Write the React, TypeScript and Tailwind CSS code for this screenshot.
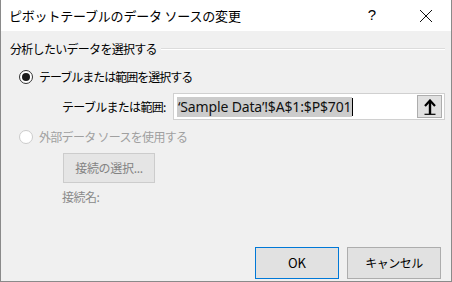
export default function App() {
  const jp = "font-['Noto_Sans_CJK_JP',sans-serif]";
  return (
    <div className={`w-[452px] h-[282px] flex flex-col bg-[#f0f0f0] border-l border-r border-b border-[#8a8a8a] text-[12px] text-black ${jp}`}>
      {/* title bar */}
      <div className="h-[31px] bg-white flex items-center shrink-0">
        <span className="pl-[8px] text-[13px] tracking-[-0.2px]">ピボットテーブルのデータ ソースの変更</span>
        <span className="ml-auto mr-[43px] text-[15px] font-['Liberation_Sans',sans-serif] font-light">?</span>
        <svg width="14" height="14" viewBox="0 0 14 14" className="mr-[18px]">
          <path d="M1 1 L13 13 M13 1 L1 13" stroke="#111" strokeWidth="1" />
        </svg>
      </div>

      <div className="flex flex-col px-[8px]">
        {/* group header */}
        <div className="mt-[9px] h-[18px] flex items-center">
          <span className="tracking-[-0.7px] pl-[1px]">分析したいデータを選択する</span>
          <div className="flex-1 ml-[4px] mr-[-2px] flex flex-col">
            <div className="h-px bg-[#dcdcdc]" />
            <div className="h-px bg-white" />
          </div>
        </div>

        {/* radio 1 */}
        <div className="mt-[9px] h-[20px] flex items-center pl-[10px]">
          <span className="w-[14px] h-[14px] rounded-full border border-[#333] bg-white flex items-center justify-center">
            <span className="w-[8px] h-[8px] rounded-full bg-[#1a1a1a]" />
          </span>
          <span className="ml-[6px] tracking-[-1px]">テーブルまたは範囲を選択する</span>
        </div>

        {/* range input row */}
        <div className="mt-[6px] h-[27px] flex items-center">
          <span className="ml-[53px] w-[111px] tracking-[-0.7px]">テーブルまたは範囲:</span>
          <div className="flex-1 h-[27px] mr-[-2px] bg-white border border-[#d0d0d0] flex items-center pl-[3px] pr-[2px]">
            <span className="h-[20px] flex items-center bg-[#cccccc] pl-[1px] pr-px text-[14px] tracking-[-0.15px] font-['Noto_Sans',sans-serif] text-[#111]">
              ‘Sample Data’!$A$1:$P$701
            </span>
            <span className="w-px h-[18px] bg-black" />
            <button className="ml-auto w-[25px] h-[23px] bg-[#e1e1e1] border border-[#adadad] flex items-center justify-center">
              <svg width="12" height="16" viewBox="0 0 12 16">
                <path d="M6 15 V3" stroke="#000" strokeWidth="2.4" />
                <path d="M1 7 L6 1.5 L11 7" stroke="#000" strokeWidth="2.2" fill="none" />
                <path d="M0.5 15.3 H11.5" stroke="#000" strokeWidth="1.2" />
              </svg>
            </button>
          </div>
        </div>

        {/* radio 2 */}
        <div className="mt-[7px] h-[20px] flex items-center pl-[10px] text-[#a0a0a0]">
          <span className="w-[14px] h-[14px] rounded-full border border-[#cccccc] bg-white" />
          <span className="ml-[6px] tracking-[-0.7px]">外部データ ソースを使用する</span>
        </div>

        {/* connection button */}
        <button className="mt-[6px] ml-[54px] w-[92px] h-[30px] bg-[#e5e5e5] border border-[#cccccc] text-[#838383] tracking-[-0.3px] flex items-center justify-center">
          接続の選択...
        </button>

        <div className="mt-[5px] h-[18px] flex items-center pl-[53px] text-[#8a8a8a] tracking-[-0.5px]">
          接続名:
        </div>

        {/* bottom buttons */}
        <div className="mt-[41px] flex justify-end gap-[8px] mr-[2px]">
          <button className="w-[84px] h-[32px] bg-[#e1e1e1] border border-[#0078d7] text-[13px]">OK</button>
          <button className="w-[94px] h-[32px] bg-[#e1e1e1] border border-[#adadad] tracking-[-0.5px]">キャンセル</button>
        </div>
      </div>
    </div>
  );
}
